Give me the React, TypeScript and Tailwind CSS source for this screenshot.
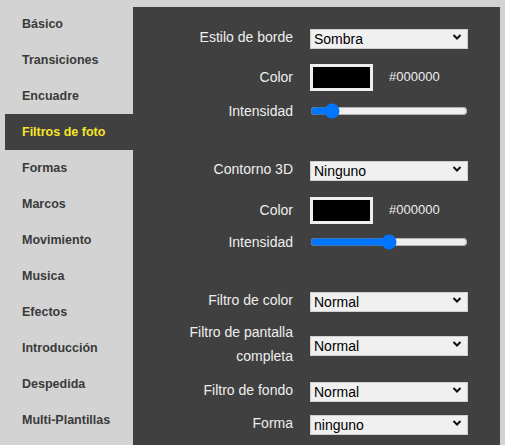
import React from 'react';

const menu = [
  'Básico',
  'Transiciones',
  'Encuadre',
  'Filtros de foto',
  'Formas',
  'Marcos',
  'Movimiento',
  'Musica',
  'Efectos',
  'Introducción',
  'Despedida',
  'Multi-Plantillas',
];

function Chevron() {
  return (
    <svg width="10" height="8" viewBox="0 0 10 8" className="pointer-events-none absolute right-[6px] top-1/2 -translate-y-1/2">
      <path d="M1.5 2 L5 5.5 L8.5 2" fill="none" stroke="#111" strokeWidth="2" />
    </svg>
  );
}

function Select({ value }: { value: string }) {
  return (
    <div className="relative w-[158px] h-[20px]">
      <select
        defaultValue={value}
        className="appearance-none w-full h-full bg-[#f0f0f0] border border-[#d0d0d0] text-black text-[14px] leading-[18px] pl-[3px] outline-none"
      >
        <option>{value}</option>
      </select>
      <Chevron />
    </div>
  );
}

function Swatch() {
  return (
    <div className="flex items-center gap-[16px]">
      <div className="w-[63px] h-[27px] border-[3px] border-[#efefef] bg-black" />
      <span className="text-[13px] text-[#eeeeee]">#000000</span>
    </div>
  );
}

function Slider({ value }: { value: number }) {
  return (
    <input
      type="range"
      min={0}
      max={100}
      defaultValue={value}
      className="w-[158px] m-0 accent-[#0075ff]"
    />
  );
}

function Row({ label, h, mt, children }: { label: React.ReactNode; h: string; mt: string; children: React.ReactNode }) {
  return (
    <div className={`flex items-center gap-[17px] ${h} ${mt}`}>
      <div className="w-[160px] text-right text-[14px] leading-[24px] text-[#eeeeee]">{label}</div>
      <div className="flex items-center">{children}</div>
    </div>
  );
}

export default function App() {
  return (
    <div
      className="flex min-h-[445px] bg-[#d3d3d3] px-[5px] overflow-hidden"
      style={{ fontFamily: '"Liberation Sans", Arial, sans-serif' }}
    >
      <nav className="w-[128px] shrink-0 pt-[6px]">
        {menu.map((item) => (
          <div
            key={item}
            className={
              item === 'Filtros de foto'
                ? 'h-[36px] flex items-center pl-[17px] bg-[#404040] text-[#f7e52a] font-bold text-[12.5px]'
                : 'h-[36px] flex items-center pl-[17px] text-[#3a3a3a] font-bold text-[12.5px]'
            }
          >
            {item}
          </div>
        ))}
      </nav>
      <main className="flex-1 mt-[7px] bg-[#404040] pt-[20px] pb-[20px]">
        <Row label="Estilo de borde" h="h-[20px]" mt="mt-0">
          <Select value="Sombra" />
        </Row>
        <Row label="Color" h="h-[30px]" mt="mt-[15px]">
          <Swatch />
        </Row>
        <Row label="Intensidad" h="h-[20px]" mt="mt-[9px]">
          <Slider value={10} />
        </Row>
        <Row label="Contorno 3D" h="h-[20px]" mt="mt-[38px]">
          <Select value="Ninguno" />
        </Row>
        <Row label="Color" h="h-[30px]" mt="mt-[16px]">
          <Swatch />
        </Row>
        <Row label="Intensidad" h="h-[20px]" mt="mt-[7px]">
          <Slider value={50} />
        </Row>
        <Row label="Filtro de color" h="h-[20px]" mt="mt-[38px]">
          <Select value="Normal" />
        </Row>
        <Row label={<span className="inline-block w-[120px]">Filtro de pantalla completa</span>} h="h-[48px]" mt="mt-[10px]">
          <Select value="Normal" />
        </Row>
        <Row label="Filtro de fondo" h="h-[20px]" mt="mt-[12px]">
          <Select value="Normal" />
        </Row>
        <Row label="Forma" h="h-[20px]" mt="mt-[13px]">
          <Select value="ninguno" />
        </Row>
      </main>
    </div>
  );
}
